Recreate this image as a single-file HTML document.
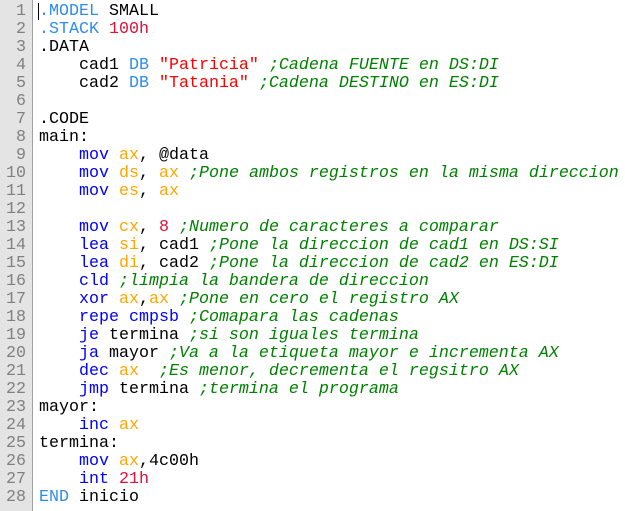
<!DOCTYPE html>
<html><head><style>
body{margin:0;width:625px;height:511px;background:#fff;overflow:hidden;position:relative}
.g{position:absolute;left:0;top:0;width:32px;height:511px;background:#e4e4e4;border-right:1px solid #a0a0a0}
pre{margin:0;font-family:"Liberation Mono",monospace;font-size:16.67px;line-height:18px;position:absolute;top:3px}
.n{left:0;width:26px;text-align:right;color:#808080}
.c{left:39px;color:#000}
.d{color:#2d8cf0}.k{color:#0000ff}.r{color:#ffa500}.s{color:#ff0000}.m{color:#e0103a}.t{color:#008000;font-style:italic}
.cur{position:absolute;left:38px;top:3px;width:1px;height:17px;background:#000}
</style></head><body>
<div class="g"></div>
<pre class="n">1
2
3
4
5
6
7
8
9
10
11
12
13
14
15
16
17
18
19
20
21
22
23
24
25
26
27
28</pre>
<pre class="c"><span class="d">.MODEL</span> SMALL
<span class="d">.STACK</span> <span class="m">100h</span>
.DATA
    cad1 <span class="d">DB</span> <span class="s">"Patricia"</span> <span class="t">;Cadena FUENTE en DS:DI</span>
    cad2 <span class="d">DB</span> <span class="s">"Tatania"</span> <span class="t">;Cadena DESTINO en ES:DI</span>

.CODE
main:
    <span class="k">mov</span> <span class="r">ax</span>, @data
    <span class="k">mov</span> <span class="r">ds</span>, <span class="r">ax</span> <span class="t">;Pone ambos registros en la misma direccion</span>
    <span class="k">mov</span> <span class="r">es</span>, <span class="r">ax</span>

    <span class="k">mov</span> <span class="r">cx</span>, <span class="m">8</span> <span class="t">;Numero de caracteres a comparar</span>
    <span class="k">lea</span> <span class="r">si</span>, cad1 <span class="t">;Pone la direccion de cad1 en DS:SI</span>
    <span class="k">lea</span> <span class="r">di</span>, cad2 <span class="t">;Pone la direccion de cad2 en ES:DI</span>
    <span class="k">cld</span> <span class="t">;limpia la bandera de direccion</span>
    <span class="k">xor</span> <span class="r">ax</span>,<span class="r">ax</span> <span class="t">;Pone en cero el registro AX</span>
    <span class="k">repe</span> <span class="k">cmpsb</span> <span class="t">;Comapara las cadenas</span>
    <span class="k">je</span> termina <span class="t">;si son iguales termina</span>
    <span class="k">ja</span> mayor <span class="t">;Va a la etiqueta mayor e incrementa AX</span>
    <span class="k">dec</span> <span class="r">ax</span>  <span class="t">;Es menor, decrementa el regsitro AX</span>
    <span class="k">jmp</span> termina <span class="t">;termina el programa</span>
mayor:
    <span class="k">inc</span> <span class="r">ax</span>
termina:
    <span class="k">mov</span> <span class="r">ax</span>,4c00h
    <span class="k">int</span> <span class="m">21h</span>
<span class="d">END</span> inicio</pre>
<div class="cur"></div>
</body></html>
